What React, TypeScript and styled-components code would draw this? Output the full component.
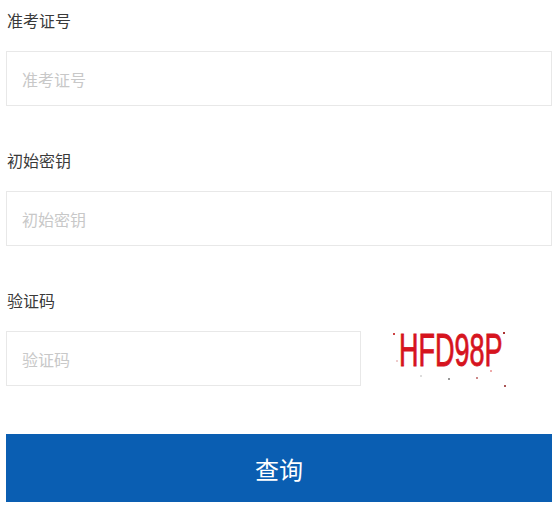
import React from "react";
import styled, { createGlobalStyle } from "styled-components";

const Global = createGlobalStyle`
  html, body { margin: 0; padding: 0; background: #fff; }
  body { font-family: "Noto Sans CJK SC", "Noto Sans", sans-serif; }
  * { box-sizing: border-box; }
`;

const Form = styled.form`
  display: flex;
  flex-direction: column;
  padding: 0 7px 0 6px;
  width: 559px;
`;

const Group = styled.div`
  display: flex;
  flex-direction: column;
  margin-bottom: 34px;
`;

const Label = styled.label`
  height: 40px;
  line-height: 40px;
  font-size: 16px;
  color: #3a3a3a;
  padding-left: 1px;
  margin-bottom: 11px;
`;

const Row = styled.div`
  display: flex;
  align-items: flex-start;
  height: 55px;
`;

const Input = styled.input<{ $width?: number }>`
  width: ${(p) => (p.$width ? `${p.$width}px` : "100%")};
  height: 55px;
  flex-shrink: 0;
  border: 1px solid #e8e8e8;
  padding: 0 15px;
  font-size: 16px;
  font-family: "Noto Sans CJK SC", "Noto Sans", sans-serif;
  color: #333;
  outline: none;
  background: #fff;
  &::placeholder { color: #c8c8c8; }
`;

const Captcha = styled.div`
  position: relative;
  margin-left: 29px;
  width: 124px;
  height: 60px;
  margin-top: -1px;
  flex-shrink: 0;
  background: #fff;
`;

const CaptchaText = styled.span`
  display: block;
  margin: -1px 0 0 9px;
  font-family: "Liberation Sans", Arial, sans-serif;
  font-size: 27px;
  line-height: 27px;
  color: #d6141e;
  -webkit-text-stroke: 0.5px #d6141e;
  white-space: nowrap;
  width: max-content;
  transform: scaleY(1.7);
  transform-origin: left top;
`;

const Noise = styled.svg`
  position: absolute;
  inset: 0;
`;

const Button = styled.button`
  margin-top: 14px;
  width: 100%;
  height: 68px;
  border: none;
  background: #0a5eb2;
  color: #fff;
  font-size: 24px;
  font-family: "Noto Sans CJK SC", "Noto Sans", sans-serif;
  cursor: pointer;
`;

function CaptchaImage() {
  const dots = [
    [3, 3, "#c44"], [113, 2, "#a33"], [114, 55, "#a55"], [58, 48, "#999"],
    [86, 47, "#c88"], [30, 45, "#ddd"], [100, 40, "#eaa"], [6, 30, "#ecc"],
  ] as const;
  return (
    <Captcha>
      <CaptchaText>HFD98P</CaptchaText>
      <Noise width="124" height="60" viewBox="0 0 124 60">
        {dots.map(([x, y, c], i) => (
          <rect key={i} x={x} y={y} width="2" height="2" fill={c} />
        ))}
      </Noise>
    </Captcha>
  );
}

export default function App() {
  return (
    <>
      <Global />
      <Form onSubmit={(e) => e.preventDefault()}>
        <Group>
          <Label>准考证号</Label>
          <Input placeholder="准考证号" />
        </Group>
        <Group>
          <Label>初始密钥</Label>
          <Input placeholder="初始密钥" />
        </Group>
        <Group>
          <Label>验证码</Label>
          <Row>
            <Input $width={355} placeholder="验证码" />
            <CaptchaImage />
          </Row>
        </Group>
        <Button type="submit">查询</Button>
      </Form>
    </>
  );
}
